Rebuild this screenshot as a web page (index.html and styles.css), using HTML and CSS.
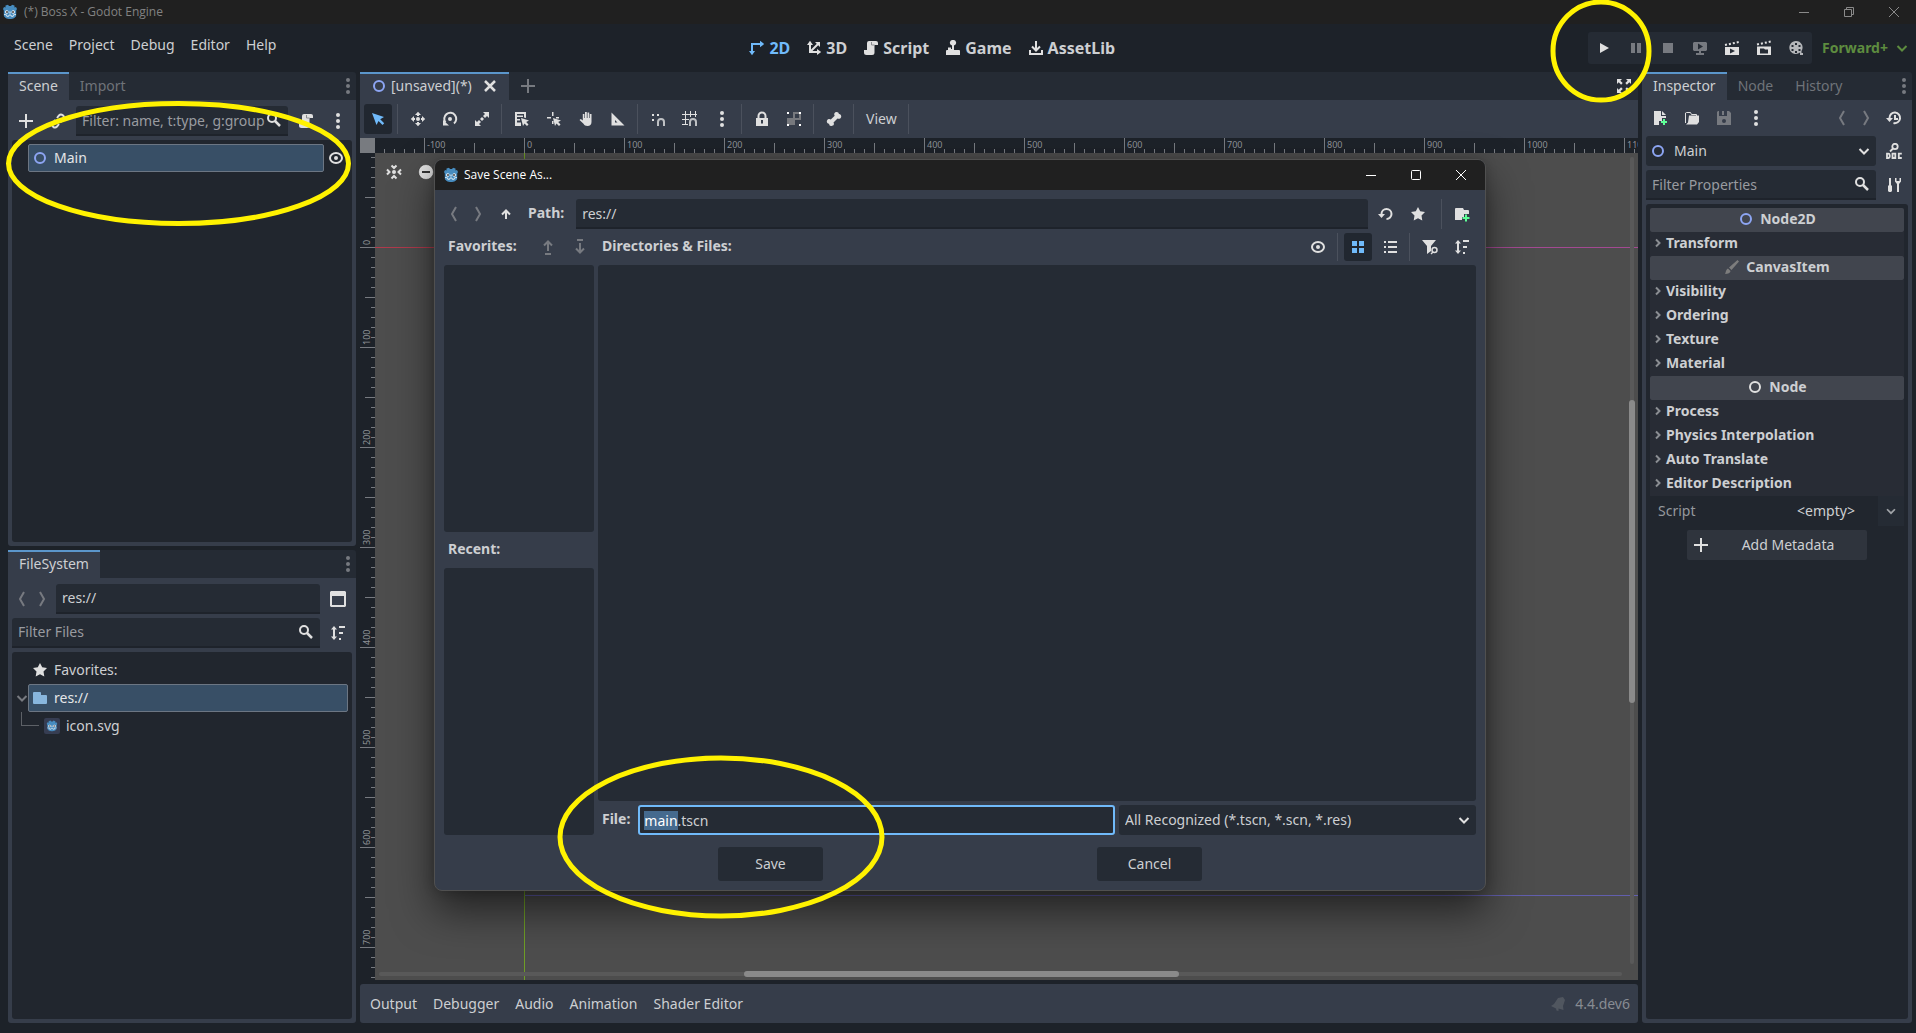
FILE: index.html
```html
<!DOCTYPE html>
<html lang="en">

<head>
    <meta charset="UTF-8">
    <meta name="viewport" content="width=device-width, initial-scale=1.0">
    <title>(*) Boss X - Godot Engine</title>
    <link rel="stylesheet" href="styles.css">
</head>

<body>
    <svg class="sprite" aria-hidden="true">
        <symbol id="godot" viewBox="0 0 16 16">
            <path fill="#478cbf" d="M1 5l1-2 1.500.6V1.500L6 .8 7 2h2l1-1.200 2.500.7v2.100L14 3l1 2-.8 1.500V11c0 2.500-3 4-6.200 4s-6.200-1.500-6.200-4V6.500z" />
            <path fill="none" stroke="#d5e6f2" d="M2 10.500l2.500.3.3 1.500h1.900l.3-1.300h2l.3 1.300h1.900l.3-1.500 2.500-.3" />
            <circle cx="4.800" cy="8" r="1.700" fill="#fff" />
            <circle cx="11.200" cy="8" r="1.700" fill="#fff" />
            <circle cx="5" cy="8" r="1" fill="#414042" />
            <circle cx="11" cy="8" r="1" fill="#414042" />
            <path stroke="#fff" d="M8 7.500v2" />
        </symbol>
        <symbol id="ring" viewBox="0 0 16 16"><circle cx="8" cy="8" r="5" fill="none" stroke="currentColor" stroke-width="2" /></symbol>
        <symbol id="plus" viewBox="0 0 16 16"><path stroke="currentColor" stroke-width="2" d="M8 1v14M1 8h14" /></symbol>
        <symbol id="cross" viewBox="0 0 16 16"><path stroke="currentColor" stroke-width="2.500" d="M3 3l10 10M13 3L3 13" /></symbol>
        <symbol id="link" viewBox="0 0 16 16"><path fill="none" stroke="currentColor" stroke-width="2" d="M7 5l2-2.500a2.600 2.600 0 0 1 4 3.700L10.500 9M9 11l-2 2.500a2.600 2.600 0 0 1-4-3.700L5.500 7M6 10l4-4" /></symbol>
        <symbol id="search" viewBox="0 0 16 16"><circle cx="6" cy="6" r="4" fill="none" stroke="currentColor" stroke-width="2" /><path stroke="currentColor" stroke-width="2.500" d="M9 9l5 5" /></symbol>
        <symbol id="script" viewBox="0 0 16 16"><path fill="currentColor" d="M6 1a2 2 0 0 0-2 2v7H1v2.500A2.500 2.500 0 0 0 3.500 15H9a2.500 2.500 0 0 0 2.500-2.500V5H15V3a2 2 0 0 0-2-2z" /><path fill="none" stroke="#8a8c90" d="M8.500 2v3h3" /></symbol>
        <symbol id="dots" viewBox="0 0 16 16"><g fill="currentColor"><circle cx="8" cy="2" r="2" /><circle cx="8" cy="8" r="2" /><circle cx="8" cy="14" r="2" /></g></symbol>
        <symbol id="eye" viewBox="0 0 16 16"><ellipse cx="8" cy="8" rx="6" ry="5" fill="none" stroke="currentColor" stroke-width="2" /><circle cx="8" cy="8" r="2" fill="currentColor" /></symbol>
        <symbol id="star" viewBox="0 0 16 16"><path fill="currentColor" d="M8 1l2.200 4.300L15 6l-3.500 3.400.8 5.100L8 12.200l-4.300 2.300.8-5.100L1 6l4.800-.7z" /></symbol>
        <symbol id="folder" viewBox="0 0 16 16"><path fill="currentColor" d="M1 3a1 1 0 0 1 1-1h6a1 1 0 0 1 1 1v2h5a1 1 0 0 1 1 1v7a1 1 0 0 1-1 1H2a1 1 0 0 1-1-1z" /></symbol>
        <symbol id="folder-new" viewBox="0 0 16 16"><path fill="currentColor" d="M1 3a1 1 0 0 1 1-1h7l1 2h4a1 1 0 0 1 1 1v3h-5v3H8v3H1z" /><path stroke="#5fff97" stroke-width="2" d="M12 8.500v7M8.500 12h7" /></symbol>
        <symbol id="back" viewBox="0 0 16 16"><path fill="none" stroke="currentColor" stroke-width="2" d="M10 1L6 8l4 7" /></symbol>
        <symbol id="forward" viewBox="0 0 16 16"><path fill="none" stroke="currentColor" stroke-width="2" d="M6 1l4 7-4 7" /></symbol>
        <symbol id="up" viewBox="0 0 16 16"><path fill="none" stroke="currentColor" stroke-width="2" d="M8 13V5M4 8.500l4-4 4 4" /></symbol>
        <symbol id="move-up" viewBox="0 0 16 16"><path fill="none" stroke="currentColor" stroke-width="2" d="M8 12V3M4 6.500l4-4 4 4M5 15h6" /></symbol>
        <symbol id="move-down" viewBox="0 0 16 16"><path fill="none" stroke="currentColor" stroke-width="2" d="M8 4v9M4 9.500l4 4 4-4M5 1h6" /></symbol>
        <symbol id="chevron" viewBox="0 0 16 16"><path fill="none" stroke="currentColor" stroke-width="2" d="M3.500 6L8 10.500 12.500 6" /></symbol>
        <symbol id="caret" viewBox="0 0 16 16"><path fill="none" stroke="currentColor" stroke-width="2" d="M6 4.500L9.500 8 6 11.500" /></symbol>
        <symbol id="panel" viewBox="0 0 16 16"><path fill="currentColor" fill-rule="evenodd" d="M1 0h14l1 1v14l-1 1H1l-1-1V1zM2 5v9h12V5z" /></symbol>
        <symbol id="sort" viewBox="0 0 16 16"><path fill="currentColor" d="M9 1h6v2H9zM9 7h4v2H9zM9 13h2v2H9zM4 1l3 3.500H5v7h2L4 15l-3-3.500h2v-7H1z" /></symbol>
        <symbol id="mode-2d" viewBox="0 0 16 16"><path fill="none" stroke="currentColor" stroke-width="2" d="M3 12V4h8" /><path fill="currentColor" d="M11 .8L15.200 4 11 7.200zM0 11l3 4.200L6 11z" /></symbol>
        <symbol id="mode-3d" viewBox="0 0 16 16"><path fill="none" stroke="currentColor" stroke-width="2" d="M4 4v8h8M4 12l8-8" /><path fill="currentColor" d="M1 5l3-4.200L7 5zM11 9l4.200 3-4.200 3zM9 2h5v5z" /></symbol>
        <symbol id="game" viewBox="0 0 16 16"><path fill="currentColor" d="M8 0a2.800 2.800 0 0 0-1 5.500V9H6V7.500H3V10H1.500L1 11v4h14v-4l-.5-1H9V5.500A2.800 2.800 0 0 0 8 0z" /></symbol>
        <symbol id="assets" viewBox="0 0 16 16"><path fill="none" stroke="currentColor" stroke-width="2" d="M8 1v9M4 6.500l4 4 4-4M2 10v4h12v-4" /></symbol>
        <symbol id="play" viewBox="0 0 16 16"><path fill="currentColor" d="M4 3l9 5-9 5z" /></symbol>
        <symbol id="pause" viewBox="0 0 16 16"><path fill="currentColor" d="M3 3h4v10H3zM9 3h4v10H9z" /></symbol>
        <symbol id="stop" viewBox="0 0 16 16"><path fill="currentColor" d="M3 3h10v10H3z" /></symbol>
        <symbol id="remote" viewBox="0 0 16 16"><path fill="currentColor" fill-rule="evenodd" d="M2 2h12l1 1v7l-1 1H9v2h3v2H4v-2h3v-2H2l-1-1V3zM6 3.500v6l5-3z" /></symbol>
        <symbol id="play-scene" viewBox="0 0 16 16"><path fill="currentColor" fill-rule="evenodd" d="M1 7h14v8H1zM6 8.500v5l5-2.500z" /><path stroke="currentColor" stroke-width="2" stroke-dasharray="2 2" d="M1 5l14-3" /></symbol>
        <symbol id="play-custom" viewBox="0 0 16 16"><path fill="currentColor" fill-rule="evenodd" d="M1 6.500h14V15H1zM4 8.500v5h8V9.500H9l-1-1z" /><path stroke="currentColor" stroke-width="2" stroke-dasharray="2 2" d="M1 4.500l14-3" /></symbol>
        <symbol id="movie" viewBox="0 0 16 16"><path fill="currentColor" fill-rule="evenodd" d="M8 1a6.500 6.500 0 1 0 4 11.500V15h3v-2h-1.500V11A6.500 6.500 0 0 0 8 1zM7 3h2v2H7zM3.500 5h2v2h-2zM10.500 5h2v2h-2zM3.500 9h2v2h-2zM10.500 9h2v2h-2zM7 11h2v2H7z" /></symbol>
        <symbol id="expand" viewBox="0 0 16 16"><path fill="currentColor" d="M1 1h5L4.300 2.700l2.400 2.400-1.600 1.600-2.400-2.400L1 6zM15 1v5l-1.700-1.700-2.400 2.400-1.600-1.600 2.400-2.400L10 1zM1 15v-5l1.700 1.700 2.400-2.400 1.600 1.600-2.400 2.400L6 15zM15 15h-5l1.700-1.700-2.400-2.400 1.600-1.600 2.400 2.400L15 10z" /></symbol>
        <symbol id="select" viewBox="0 0 16 16"><path fill="currentColor" d="M2 2l4.500 12 2-4 4 4 1.700-1.700-4-4L14 6z" /></symbol>
        <symbol id="move" viewBox="0 0 16 16"><circle cx="8" cy="8" r="2" fill="currentColor" /><path fill="currentColor" d="M8 .8L5 4h2v1h2V4h2zM8 15.200l3-3.200H9v-1H7v1H5zM.8 8L4 11V9h1V7H4V5zM15.200 8L12 5v2h-1v2h1v2z" /></symbol>
        <symbol id="rotate" viewBox="0 0 16 16"><path fill="none" stroke="currentColor" stroke-width="2" d="M3.500 11.500A6 6 0 1 1 12 12.500" /><path fill="currentColor" d="M1 9v5.500h6z" /><circle cx="8" cy="8" r="2" fill="currentColor" /></symbol>
        <symbol id="scale" viewBox="0 0 16 16"><path fill="currentColor" d="M9 1h6v6l-2-2-2 2-2-2 2-2zM1 9l2 2 2-2 2 2-2 2 2 2H1zM6 8l2-2 2 2-2 2z" /></symbol>
        <symbol id="list-select" viewBox="0 0 16 16"><path fill="currentColor" fill-rule="evenodd" d="M1 1h11v6l-2-.5V3H3v1.500h6V6H3v2h3v1.500H3v2h4V15H1z" /><path fill="currentColor" d="M7 7l2 8 1.500-2.500L13 15l1.500-1.500L12.200 11 15 9.500z" /></symbol>
        <symbol id="pivot" viewBox="0 0 16 16"><path fill="currentColor" d="M6 1h1.500v4H6zM1 6h4v1.500H1zM10 6h3v1.500h-3zM6 10h1.500v3H6zM7 7l2 8 1.500-2.500L13 15l1.500-1.500L12.200 11 15 9.500z" /></symbol>
        <symbol id="hand" viewBox="0 0 16 16"><path fill="currentColor" d="M7 1h1.800v6h.7V1.500h1.700V7h.6V3h1.700v8c0 2.500-1.500 4-4 4-2 0-3.200-.8-4-2.200L1.500 9l1.300-1 2 1.500V3h1.600v4H7z" /></symbol>
        <symbol id="measure" viewBox="0 0 16 16"><path fill="currentColor" fill-rule="evenodd" d="M1.500 1.500v13h13zM5 9l2.500 2.500H5z" /></symbol>
        <symbol id="snap" viewBox="0 0 16 16"><path fill="currentColor" d="M2 3h2v2H2zM7 3h2v2H7zM2 8h2v2H2z" /><path fill="none" stroke="#bfc1c4" stroke-width="2" d="M8 15v-4a3 3 0 0 1 6 0v4" /></symbol>
        <symbol id="grid-snap" viewBox="0 0 16 16"><path stroke="currentColor" d="M3.500 0v13M8.500 0v6M13.500 0v6M0 3.500h15M0 8.500h7M0 13.500h6" /><path fill="none" stroke="#bfc1c4" stroke-width="2" d="M8 15v-4a3 3 0 0 1 6 0v4" /></symbol>
        <symbol id="lock" viewBox="0 0 16 16"><path fill="none" stroke="currentColor" stroke-width="2" d="M4.500 8V5a3.500 3.500 0 0 1 7 0v3" /><path fill="currentColor" fill-rule="evenodd" d="M2 7h12v8H2zM7 9v3.500h2V9z" /></symbol>
        <symbol id="group" viewBox="0 0 16 16"><path fill="#77797e" fill-rule="evenodd" d="M7 1h8v8h-6v5H1V7h6zM9 3v4h4V3z" /><path fill="#fff" d="M1 1h2v2H1zM13 1h2v2h-2zM1 13h2v2H1zM13 13h2v2h-2z" /></symbol>
        <symbol id="bone" viewBox="0 0 16 16"><path fill="currentColor" d="M10.500 1a2.300 2.300 0 0 0-1.800 3.700L4.800 8.600A2.400 2.400 0 1 0 3 12.800a2.400 2.400 0 1 0 4.500-1.400l4-4A2.400 2.400 0 1 0 13 3a2.400 2.400 0 0 0-2.500-2z" /></symbol>
        <symbol id="center" viewBox="0 0 16 16"><circle cx="8" cy="8" r="2" fill="currentColor" /><path fill="none" stroke="currentColor" stroke-width="2" d="M5.500 1.500L8 4l2.500-2.500M5.500 14.500L8 12l2.500 2.500M1 5.500L3.500 8 1 10.500M15 5.500L12.500 8l2.500 2.500" /></symbol>
        <symbol id="zoom-less" viewBox="0 0 16 16"><circle cx="8" cy="8" r="7.500" fill="#e0e0e0" stroke="#222" stroke-width=".5" /><path stroke="#333" stroke-width="2" d="M4 8h8" /></symbol>
        <symbol id="file-new" viewBox="0 0 16 16"><path fill="currentColor" d="M2 1h7v5h5v2h-4v3H7v4H2zM10 1l4 4h-4z" /><path stroke="#5fff97" stroke-width="2" d="M12 9v6M9 12h6" /></symbol>
        <symbol id="load" viewBox="0 0 16 16"><path fill="none" stroke="currentColor" d="M1.500 13V3l1-.5h4l1 2h5v2" /><path fill="currentColor" d="M5 5.500h10v6.500l-2 2.500H2l2-2z" /></symbol>
        <symbol id="save" viewBox="0 0 16 16"><path fill="currentColor" fill-rule="evenodd" d="M1 2l1-1h1v5h8V1h2l2 2v12H1zM8 9a2 2 0 1 0 0 4 2 2 0 0 0 0-4z" /><path fill="currentColor" d="M6 1h2v4H6z" /></symbol>
        <symbol id="history" viewBox="0 0 16 16"><path fill="none" stroke="currentColor" stroke-width="2" d="M3.500 9V8a5.300 5.300 0 1 1 4 5M9 5v4h3" /><path fill="currentColor" d="M0 8h7l-3.500 4z" /></symbol>
        <symbol id="doc" viewBox="0 0 16 16"><circle cx="9" cy="3.500" r="2.700" fill="none" stroke="currentColor" stroke-width="1.800" /><path fill="none" stroke="currentColor" stroke-width="1.800" d="M7 5.500L4 8.500M1 10.700v4.300h1.200a1.500 1.500 0 0 0 1.500-1.500v-1.300a1.500 1.500 0 0 0-1.500-1.500zM6.500 10.700h2.800v4.300H6.500zM15.800 10.700h-3v4.300h3" /></symbol>
        <symbol id="tools" viewBox="0 0 16 16"><path fill="currentColor" d="M3 1h2v7l1 1v5l-1 1H3l-1-1V9l1-1zM9 1v3.500L11 7v8h2V7l2-2.500V1h-1.500v3h-3V1z" /></symbol>
        <symbol id="brush" viewBox="0 0 16 16"><path fill="currentColor" d="M13.500 1L15 2.500 7.500 11 5 8.500zM4 9.500L6.500 12c0 2-2.500 3-5.500 3 1-1 .5-4.500 3-5.500z" /></symbol>
        <symbol id="refresh" viewBox="0 0 16 16"><path fill="none" stroke="currentColor" stroke-width="2" d="M3.500 9V8a5 5 0 1 1 5 5" /><path fill="currentColor" d="M0 8h7l-3.500 4z" /></symbol>
        <symbol id="thumbs" viewBox="0 0 16 16"><path fill="currentColor" d="M2 2h5v5H2zM9 2h5v5H9zM2 9h5v5H2zM9 9h5v5H9z" /></symbol>
        <symbol id="list" viewBox="0 0 16 16"><path fill="currentColor" d="M2 2h2v2H2zM6 2h9v2H6zM2 7h2v2H2zM6 7h9v2H6zM2 12h2v2H2zM6 12h9v2H6z" /></symbol>
        <symbol id="filter" viewBox="0 0 16 16"><path fill="currentColor" d="M0 1h14l-5 6v5l-4 3V7z" /><circle cx="12.500" cy="11" r="2.500" fill="#363d4a" stroke="currentColor" stroke-width="1.500" /><path stroke="currentColor" stroke-width="1.500" d="M11 13l-2 2" /></symbol>
        <symbol id="bell" viewBox="0 0 16 16"><path fill="currentColor" d="M8 2l5-1 2 3-2 6 .5 4-5-1.500V15l-2-.5-.5-2L1 10l3-2z" /></symbol>
        <symbol id="win-min" viewBox="0 0 16 16"><path stroke="currentColor" d="M3 8.500h10" /></symbol>
        <symbol id="win-max" viewBox="0 0 16 16"><rect x="3.500" y="3.500" width="9" height="9" rx="1" fill="none" stroke="currentColor" /></symbol>
        <symbol id="win-restore" viewBox="0 0 16 16"><path fill="none" stroke="currentColor" d="M3.500 5.500h7v7h-7zM5.500 5V3.500h7v7H11" /></symbol>
        <symbol id="win-close" viewBox="0 0 16 16"><path stroke="currentColor" d="M3 3l10 10M13 3L3 13" /></symbol>
    </svg>

    <header class="titlebar">
        <svg class="icon"><use href="#godot" /></svg>
        <span class="titlebar-text">(*) Boss X - Godot Engine</span>
        <button class="win-btn" aria-label="Minimize"><svg class="icon"><use href="#win-min" /></svg></button>
        <button class="win-btn" aria-label="Restore"><svg class="icon"><use href="#win-restore" /></svg></button>
        <button class="win-btn" aria-label="Close"><svg class="icon"><use href="#win-close" /></svg></button>
    </header>

    <div class="menubar">
        <nav class="text-menu">
            <button>Scene</button>
            <button>Project</button>
            <button>Debug</button>
            <button>Editor</button>
            <button>Help</button>
        </nav>
        <div class="modes">
            <button class="active"><svg class="icon"><use href="#mode-2d" /></svg>2D</button>
            <button><svg class="icon"><use href="#mode-3d" /></svg>3D</button>
            <button><svg class="icon"><use href="#script" /></svg>Script</button>
            <button><svg class="icon"><use href="#game" /></svg>Game</button>
            <button><svg class="icon"><use href="#assets" /></svg>AssetLib</button>
        </div>
        <div class="run">
            <div class="run-bar">
                <button class="tool" aria-label="Run Project"><svg class="icon"><use href="#play" /></svg></button>
                <button class="tool dim" aria-label="Pause"><svg class="icon"><use href="#pause" /></svg></button>
                <button class="tool dim" aria-label="Stop"><svg class="icon"><use href="#stop" /></svg></button>
                <button class="tool dim" aria-label="Remote Debug"><svg class="icon"><use href="#remote" /></svg></button>
                <button class="tool" aria-label="Run Current Scene"><svg class="icon"><use href="#play-scene" /></svg></button>
                <button class="tool" aria-label="Run Specific Scene"><svg class="icon"><use href="#play-custom" /></svg></button>
                <button class="tool soft" aria-label="Movie Maker"><svg class="icon"><use href="#movie" /></svg></button>
            </div>
            <button class="renderer">Forward+<svg class="icon"><use href="#chevron" /></svg></button>
        </div>
    </div>

    <div class="workspace">
        <div class="side">
            <section class="dock">
                <div class="tabs">
                    <button class="tab active">Scene</button>
                    <button class="tab">Import</button>
                    <button class="tab-menu" aria-label="Dock options"><svg class="icon"><use href="#dots" /></svg></button>
                </div>
                <div class="dock-body">
                    <div class="row">
                        <button class="tool" aria-label="Add Node"><svg class="icon"><use href="#plus" /></svg></button>
                        <button class="tool" aria-label="Instantiate Scene"><svg class="icon"><use href="#link" /></svg></button>
                        <div class="field">
                            <input type="text" aria-label="Filter nodes" placeholder="Filter: name, t:type, g:group">
                            <svg class="icon"><use href="#search" /></svg>
                        </div>
                        <button class="tool" aria-label="Attach Script"><svg class="icon"><use href="#script" /></svg></button>
                        <button class="tool" aria-label="More"><svg class="icon"><use href="#dots" /></svg></button>
                    </div>
                    <div class="tree">
                        <div class="tree-row">
                            <span class="fold"></span>
                            <button class="item selected"><svg class="icon blue"><use href="#ring" /></svg>Main</button>
                            <button class="visible" aria-label="Toggle visibility"><svg class="icon"><use href="#eye" /></svg></button>
                        </div>
                    </div>
                </div>
            </section>

            <section class="dock">
                <div class="tabs">
                    <button class="tab active">FileSystem</button>
                    <button class="tab-menu" aria-label="Dock options"><svg class="icon"><use href="#dots" /></svg></button>
                </div>
                <div class="dock-body">
                    <div class="row">
                        <div class="arrows">
                            <button class="dim" aria-label="Back"><svg class="icon"><use href="#back" /></svg></button>
                            <button class="dim" aria-label="Forward"><svg class="icon"><use href="#forward" /></svg></button>
                        </div>
                        <div class="field"><input type="text" aria-label="Current path" value="res://"></div>
                        <button class="tool" aria-label="Change split mode"><svg class="icon"><use href="#panel" /></svg></button>
                    </div>
                    <div class="row">
                        <div class="field">
                            <input type="text" aria-label="Filter files" placeholder="Filter Files">
                            <svg class="icon"><use href="#search" /></svg>
                        </div>
                        <button class="tool" aria-label="Sort files"><svg class="icon"><use href="#sort" /></svg></button>
                    </div>
                    <div class="tree">
                        <div class="tree-row">
                            <span class="fold"></span>
                            <button class="item"><svg class="icon"><use href="#star" /></svg>Favorites:</button>
                        </div>
                        <div class="tree-row">
                            <span class="fold dim"><svg class="icon"><use href="#chevron" /></svg></span>
                            <button class="item selected"><svg class="icon folder"><use href="#folder" /></svg>res://</button>
                        </div>
                        <div class="tree-row child">
                            <span class="branch"></span>
                            <button class="item"><svg class="icon thumb"><use href="#godot" /></svg>icon.svg</button>
                        </div>
                    </div>
                </div>
            </section>
        </div>

        <main class="center">
            <section class="editor">
                <div class="tabs">
                    <button class="tab active scene-tab"><svg class="icon blue"><use href="#ring" /></svg>[unsaved](*)<svg class="icon close"><use href="#cross" /></svg></button>
                    <button class="tab add-tab" aria-label="Add a new scene"><svg class="icon"><use href="#plus" /></svg></button>
                    <button class="tab-menu bright" aria-label="Distraction free mode"><svg class="icon"><use href="#expand" /></svg></button>
                </div>
                <div class="toolbar">
                    <button class="tool on" aria-label="Select Mode"><svg class="icon"><use href="#select" /></svg></button>
                    <span class="sep"></span>
                    <button class="tool" aria-label="Move Mode"><svg class="icon"><use href="#move" /></svg></button>
                    <button class="tool" aria-label="Rotate Mode"><svg class="icon"><use href="#rotate" /></svg></button>
                    <button class="tool" aria-label="Scale Mode"><svg class="icon"><use href="#scale" /></svg></button>
                    <span class="sep"></span>
                    <button class="tool" aria-label="List Select"><svg class="icon"><use href="#list-select" /></svg></button>
                    <button class="tool" aria-label="Change Pivot"><svg class="icon"><use href="#pivot" /></svg></button>
                    <button class="tool" aria-label="Pan Mode"><svg class="icon"><use href="#hand" /></svg></button>
                    <button class="tool" aria-label="Ruler Mode"><svg class="icon"><use href="#measure" /></svg></button>
                    <span class="sep"></span>
                    <button class="tool" aria-label="Smart Snap"><svg class="icon"><use href="#snap" /></svg></button>
                    <button class="tool" aria-label="Grid Snap"><svg class="icon"><use href="#grid-snap" /></svg></button>
                    <button class="tool" aria-label="Snapping Options"><svg class="icon"><use href="#dots" /></svg></button>
                    <span class="sep"></span>
                    <button class="tool" aria-label="Lock"><svg class="icon"><use href="#lock" /></svg></button>
                    <button class="tool" aria-label="Group"><svg class="icon"><use href="#group" /></svg></button>
                    <span class="sep"></span>
                    <button class="tool" aria-label="Skeleton Options"><svg class="icon"><use href="#bone" /></svg></button>
                    <span class="sep"></span>
                    <button class="view-btn">View</button>
                    <span class="sep"></span>
                </div>
                <div class="canvas-grid">
                    <div class="corner"></div>
                    <div class="ruler ruler-x">
                        <span>-100</span><span>0</span><span>100</span><span>200</span><span>300</span><span>400</span><span>500</span><span>600</span><span>700</span><span>800</span><span>900</span><span>1000</span><span>1100</span>
                    </div>
                    <div class="ruler ruler-y">
                        <span>0</span><span>100</span><span>200</span><span>300</span><span>400</span><span>500</span><span>600</span><span>700</span>
                    </div>
                    <div class="canvas">
                        <div class="axis axis-x"></div>
                        <div class="axis axis-y"></div>
                        <div class="frame-top"></div>
                        <div class="frame-bottom"></div>
                        <div class="zoom-tools">
                            <button aria-label="Center View"><svg class="icon"><use href="#center" /></svg></button>
                            <button aria-label="Zoom Out"><svg class="icon"><use href="#zoom-less" /></svg></button>
                        </div>
                        <div class="scroll scroll-x"><div class="thumb-x"></div></div>
                        <div class="scroll scroll-y"><div class="thumb-y"></div></div>
                    </div>
                </div>
            </section>
            <footer class="bottom-panel">
                <nav class="text-menu">
                    <button>Output</button>
                    <button>Debugger</button>
                    <button>Audio</button>
                    <button>Animation</button>
                    <button>Shader Editor</button>
                </nav>
                <div class="version"><svg class="icon"><use href="#bell" /></svg><span>4.4.dev6</span></div>
            </footer>
        </main>

        <section class="dock inspector">
            <div class="tabs">
                <button class="tab active">Inspector</button>
                <button class="tab">Node</button>
                <button class="tab">History</button>
                <button class="tab-menu" aria-label="Dock options"><svg class="icon"><use href="#dots" /></svg></button>
            </div>
            <div class="dock-body">
                <div class="row tools-row">
                    <button class="tool" aria-label="New Resource"><svg class="icon"><use href="#file-new" /></svg></button>
                    <button class="tool" aria-label="Load Resource"><svg class="icon"><use href="#load" /></svg></button>
                    <button class="tool dim" aria-label="Save Resource"><svg class="icon"><use href="#save" /></svg></button>
                    <button class="tool" aria-label="Extra options"><svg class="icon"><use href="#dots" /></svg></button>
                    <div class="arrows push">
                        <button class="dim" aria-label="Previous object"><svg class="icon"><use href="#back" /></svg></button>
                        <button class="dim" aria-label="Next object"><svg class="icon"><use href="#forward" /></svg></button>
                    </div>
                    <button class="tool" aria-label="History"><svg class="icon"><use href="#history" /></svg></button>
                </div>
                <div class="row">
                    <div class="drop">
                        <svg class="icon blue lead"><use href="#ring" /></svg>
                        <select class="with-lead" aria-label="Edited object"><option>Main</option></select>
                        <svg class="icon arrow"><use href="#chevron" /></svg>
                    </div>
                    <button class="tool" aria-label="Open documentation"><svg class="icon"><use href="#doc" /></svg></button>
                </div>
                <div class="row">
                    <div class="field">
                        <input type="text" aria-label="Filter properties" placeholder="Filter Properties">
                        <svg class="icon"><use href="#search" /></svg>
                    </div>
                    <button class="tool" aria-label="Manage properties"><svg class="icon"><use href="#tools" /></svg></button>
                </div>
                <div class="props">
                    <h3><svg class="icon blue"><use href="#ring" /></svg>Node2D</h3>
                    <button class="group"><svg class="icon"><use href="#caret" /></svg>Transform</button>
                    <h3><svg class="icon grey"><use href="#brush" /></svg>CanvasItem</h3>
                    <button class="group"><svg class="icon"><use href="#caret" /></svg>Visibility</button>
                    <button class="group"><svg class="icon"><use href="#caret" /></svg>Ordering</button>
                    <button class="group"><svg class="icon"><use href="#caret" /></svg>Texture</button>
                    <button class="group"><svg class="icon"><use href="#caret" /></svg>Material</button>
                    <h3><svg class="icon"><use href="#ring" /></svg>Node</h3>
                    <button class="group"><svg class="icon"><use href="#caret" /></svg>Process</button>
                    <button class="group"><svg class="icon"><use href="#caret" /></svg>Physics Interpolation</button>
                    <button class="group"><svg class="icon"><use href="#caret" /></svg>Auto Translate</button>
                    <button class="group"><svg class="icon"><use href="#caret" /></svg>Editor Description</button>
                    <div class="prop">
                        <span class="prop-name">Script</span>
                        <button class="prop-value">&lt;empty&gt;</button>
                        <button class="prop-more" aria-label="Script options"><svg class="icon"><use href="#chevron" /></svg></button>
                    </div>
                    <button class="add-meta"><svg class="icon"><use href="#plus" /></svg><span>Add Metadata</span></button>
                </div>
            </div>
        </section>
    </div>

    <div class="dialog" role="dialog" aria-label="Save Scene As...">
        <div class="dialog-title">
            <svg class="icon"><use href="#godot" /></svg>
            <span class="titlebar-text">Save Scene As...</span>
            <button class="win-btn" aria-label="Minimize"><svg class="icon"><use href="#win-min" /></svg></button>
            <button class="win-btn" aria-label="Maximize"><svg class="icon"><use href="#win-max" /></svg></button>
            <button class="win-btn" aria-label="Close"><svg class="icon"><use href="#win-close" /></svg></button>
        </div>
        <div class="dialog-body">
            <div class="row">
                <div class="arrows spaced">
                    <button class="dim" aria-label="Back"><svg class="icon"><use href="#back" /></svg></button>
                    <button class="dim" aria-label="Forward"><svg class="icon"><use href="#forward" /></svg></button>
                </div>
                <button class="tool" aria-label="Parent folder"><svg class="icon"><use href="#up" /></svg></button>
                <label class="caption path-label" for="path">Path:</label>
                <div class="field"><input type="text" id="path" value="res://"></div>
                <button class="tool" aria-label="Refresh"><svg class="icon"><use href="#refresh" /></svg></button>
                <button class="tool" aria-label="Favorite"><svg class="icon"><use href="#star" /></svg></button>
                <span class="sep wide"></span>
                <button class="tool" aria-label="Create folder"><svg class="icon"><use href="#folder-new" /></svg></button>
            </div>
            <div class="browser">
                <div class="places">
                    <div class="row head">
                        <span class="caption grow">Favorites:</span>
                        <button class="tool dim" aria-label="Move up"><svg class="icon"><use href="#move-up" /></svg></button>
                        <button class="tool dim" aria-label="Move down"><svg class="icon"><use href="#move-down" /></svg></button>
                    </div>
                    <div class="list"></div>
                    <div class="row head"><span class="caption">Recent:</span></div>
                    <div class="list"></div>
                </div>
                <div class="files">
                    <div class="row head">
                        <span class="caption grow">Directories &amp; Files:</span>
                        <button class="tool" aria-label="Toggle hidden files"><svg class="icon"><use href="#eye" /></svg></button>
                        <span class="sep"></span>
                        <button class="tool on" aria-label="Grid view"><svg class="icon"><use href="#thumbs" /></svg></button>
                        <button class="tool" aria-label="List view"><svg class="icon"><use href="#list" /></svg></button>
                        <span class="sep"></span>
                        <button class="tool" aria-label="Toggle filter"><svg class="icon"><use href="#filter" /></svg></button>
                        <button class="tool" aria-label="Sort"><svg class="icon"><use href="#sort" /></svg></button>
                    </div>
                    <div class="list"></div>
                    <div class="row">
                        <label class="caption" for="file">File:</label>
                        <div class="field file-field"><input type="text" id="file" value="main.tscn"></div>
                        <div class="drop type-drop">
                            <select aria-label="File type"><option>All Recognized (*.tscn, *.scn, *.res)</option></select>
                            <svg class="icon arrow"><use href="#chevron" /></svg>
                        </div>
                    </div>
                </div>
            </div>
            <div class="actions">
                <button>Save</button>
                <button>Cancel</button>
            </div>
        </div>
    </div>

    <svg class="marks" aria-hidden="true">
        <ellipse cx="178.500" cy="163.500" rx="170" ry="60" />
        <ellipse cx="1601" cy="51" rx="48" ry="49" />
        <ellipse cx="721" cy="837" rx="161" ry="79" />
    </svg>

    <script>
        // Preselect the name without its extension
        const fileInput = document.getElementById("file");
        fileInput.focus();
        fileInput.setSelectionRange(0, fileInput.value.lastIndexOf("."));
    </script>
</body>

</html>
```
FILE: styles.css
```css
* {
    box-sizing: border-box;
}

body {
    display: flex;
    flex-direction: column;
    height: 100vh;
    margin: 0;
    overflow: hidden;
    background-color: #1d2229;
    color: #cdcfd2;
    font-family: "Noto Sans", "Open Sans", sans-serif;
    font-size: 14px;
    line-height: 20px;
}

button,
input,
select {
    margin: 0;
    padding: 0;
    border: none;
    background: none;
    color: inherit;
    font: inherit;
}

.sprite {
    display: none;
}

.icon {
    display: block;
    flex: none;
    width: 16px;
    height: 16px;
    color: #e0e0e0;
}

.icon.blue {
    color: #8da5f3;
}

.icon.grey {
    color: #7d7d7d;
}

.icon.folder {
    color: #88b6dd;
}

.dim .icon {
    color: #777a80;
}

.soft .icon {
    color: #b4b6b9;
}

/* Window title */

.titlebar {
    display: flex;
    align-items: center;
    height: 24px;
    padding-left: 2px;
    background-color: #202020;
    color: #828282;
}

.titlebar-text {
    flex: 1;
    margin-left: 6px;
    font-family: "Open Sans", "Noto Sans", sans-serif;
    font-size: 12px;
    line-height: 16px;
}

.win-btn {
    display: flex;
    align-items: center;
    justify-content: center;
    width: 45px;
    height: 22px;
}

.titlebar .win-btn .icon {
    color: #8a8a8a;
}

.dialog-title .win-btn .icon {
    color: #fff;
}

/* Menu bar */

.menubar {
    display: flex;
    align-items: center;
    justify-content: space-between;
    height: 48px;
    padding: 0 6px 0 14px;
}

.text-menu {
    display: flex;
    gap: 16px;
}

.menubar .text-menu {
    padding-bottom: 6px;
}

.modes {
    display: flex;
    gap: 16px;
    font-size: 16px;
    font-weight: 700;
}

.modes button {
    display: flex;
    align-items: center;
    gap: 4px;
}

.modes .active,
.modes .active .icon {
    color: #70bafa;
}

.run {
    display: flex;
    align-items: center;
    gap: 10px;
}

.run-bar {
    display: flex;
    gap: 4px;
    padding: 1px 2px;
    border-radius: 3px;
    background-color: #252b34;
}

.renderer {
    display: flex;
    align-items: center;
    gap: 6px;
    color: #5d8c3f;
    font-weight: 700;
}

.renderer .icon {
    color: #5d8c3f;
}

/* Docks */

.workspace {
    display: grid;
    flex: 1;
    grid-template-columns: 348px 1fr 270px;
    gap: 4px;
    min-height: 0;
    padding: 0 4px 10px 8px;
}

.side,
.center,
.editor,
.dock {
    display: flex;
    flex-direction: column;
    min-width: 0;
    min-height: 0;
}

.side,
.center {
    gap: 4px;
}

.dock,
.editor {
    flex: 1;
}

.tabs {
    display: flex;
    height: 28px;
    border-radius: 3px 3px 0 0;
    background-color: #252b34;
}

.tab {
    display: flex;
    align-items: center;
    padding: 0 11px 2px;
    border-top: 2px solid transparent;
    color: #6f7379;
}

.tab.active {
    border-top-color: #5b96cb;
    background-color: #363d4a;
    color: #cdcfd2;
}

.scene-tab {
    gap: 4px;
}

.scene-tab .close {
    margin-left: 6px;
}

.add-tab .icon {
    color: #777a80;
}

.tab-menu {
    margin-left: auto;
    padding: 0 0 0 8px;
}

.tab-menu .icon {
    color: #777a80;
}

.tab-menu.bright {
    padding-right: 6px;
}

.tab-menu.bright .icon {
    color: #e0e0e0;
}

.dock-body {
    display: flex;
    flex: 1;
    flex-direction: column;
    gap: 4px;
    padding: 6px 4px 4px;
    border-radius: 0 0 3px 3px;
    background-color: #363d4a;
}

.inspector .dock-body {
    padding-top: 4px;
}

.row {
    display: flex;
    align-items: center;
    gap: 4px;
}

.tool {
    display: flex;
    flex: none;
    align-items: center;
    justify-content: center;
    width: 28px;
    height: 30px;
    border-radius: 3px;
}

.tools-row .tool,
.head .tool {
    height: 28px;
}

.tool.on {
    background-color: #212730;
}

.tool.on .icon {
    color: #70bafa;
}

.arrows {
    display: flex;
}

.arrows button {
    display: flex;
    justify-content: center;
    width: 20px;
}

.arrows.spaced {
    gap: 4px;
}

.arrows.push {
    gap: 4px;
    margin-left: auto;
}

.field {
    display: flex;
    flex: 1;
    align-items: center;
    min-width: 0;
    height: 30px;
    padding: 0 6px;
    border-bottom: 2px solid #1e232b;
    border-radius: 3px 3px 0 0;
    background-color: #252b34;
}

.field input {
    flex: 1;
    min-width: 0;
    height: 24px;
    outline: none;
}

.field input::placeholder {
    color: #999ba0;
    opacity: 1;
}

.tree {
    flex: 1;
    padding: 4px;
    border-radius: 3px;
    background-color: #21262e;
}

.tree-row {
    display: flex;
    align-items: center;
}

.fold {
    display: flex;
    justify-content: center;
    width: 12px;
}

.item {
    display: flex;
    flex: 1;
    align-items: center;
    gap: 6px;
    height: 28px;
    padding: 0 3px;
    border: 1px solid transparent;
    border-radius: 2px;
    text-align: left;
}

.item.selected {
    border-color: #6c7683;
    background-color: #384f66;
    color: #e4e6e8;
}

.visible {
    display: flex;
    justify-content: center;
    width: 24px;
}

.branch {
    width: 18px;
    height: 14px;
    margin: 0 1px 14px 5px;
    border-bottom: 1px solid #5d6167;
    border-left: 1px solid #5d6167;
}

.thumb {
    padding: 2px;
    border-radius: 2px;
    background-color: #363d52;
}

/* Viewport */

.toolbar {
    display: flex;
    align-items: center;
    gap: 4px;
    height: 38px;
    padding: 0 4px;
    background-color: #363d4a;
}

.sep {
    width: 4px;
    height: 30px;
    background: linear-gradient(#4b515d, #4b515d) 1px 0 / 1px 100% no-repeat;
}

.sep.wide {
    width: 8px;
    background-position: 5px 0;
}

.view-btn {
    padding: 0 6px;
}

.canvas-grid {
    display: grid;
    flex: 1;
    grid-template-rows: 15px 1fr;
    grid-template-columns: 15px 1fr;
    min-height: 0;
}

.corner {
    background-color: #787b80;
}

.ruler {
    display: flex;
    min-width: 0;
    min-height: 0;
    overflow: hidden;
    color: #8e9196;
    font-size: 9px;
    line-height: 14px;
}

.ruler span {
    flex: none;
}

/* Ticks: every 100, every 50, every 10 */
.ruler-x {
    padding-left: 52px;
    background:
        repeating-linear-gradient(to right, #777a80 0 1px, transparent 1px 100px) 49px 0 / 100px 15px repeat-x,
        repeating-linear-gradient(to right, #777a80 0 1px, transparent 1px 50px) 49px 5px / 50px 10px repeat-x,
        repeating-linear-gradient(to right, #777a80 0 1px, transparent 1px 10px) 49px 11px / 10px 4px repeat-x;
}

.ruler-x span {
    width: 100px;
}

.ruler-y {
    flex-direction: column;
    background:
        repeating-linear-gradient(to bottom, #777a80 0 1px, transparent 1px 100px) 0 94px / 15px 100px repeat-y,
        repeating-linear-gradient(to bottom, #777a80 0 1px, transparent 1px 50px) 5px 44px / 10px 50px repeat-y,
        repeating-linear-gradient(to bottom, #777a80 0 1px, transparent 1px 10px) 11px 4px / 4px 10px repeat-y;
}

.ruler-y span {
    height: 100px;
    padding-top: 8px;
    writing-mode: vertical-rl;
    transform: rotate(180deg);
}

.canvas {
    position: relative;
    overflow: hidden;
    background-color: #4d4d4d;
}

/* Items placed on the 2D plane */
.axis,
.frame-top,
.frame-bottom,
.zoom-tools,
.scroll {
    position: absolute;
}

.axis-x {
    top: 94px;
    right: 0;
    left: 0;
    height: 1px;
    background-color: #b03a4c;
}

.axis-y {
    top: 0;
    bottom: 0;
    left: 149px;
    width: 1px;
    background-color: #6f9e26;
}

.frame-top,
.frame-bottom {
    right: 0;
    left: 150px;
    height: 1px;
}

.frame-top {
    top: 94px;
    background-color: #a34a92;
}

.frame-bottom {
    top: 742px;
    background-color: #625fae;
}

.zoom-tools {
    top: 11px;
    left: 11px;
    display: flex;
    gap: 16px;
}

.scroll {
    border-radius: 3px;
    background-color: #595959;
}

.scroll-x {
    right: 16px;
    bottom: 4px;
    left: 4px;
    height: 4px;
}

.scroll-y {
    top: 4px;
    right: 4px;
    bottom: 16px;
    width: 4px;
}

.thumb-x,
.thumb-y {
    border-radius: 3px;
    background-color: #8a8a8a;
}

.thumb-x {
    width: 35%;
    height: 6px;
    margin: -1px auto 0 365px;
}

.thumb-y {
    width: 6px;
    height: 303px;
    margin: 243px 0 0 -1px;
}

.bottom-panel {
    display: flex;
    align-items: center;
    justify-content: space-between;
    height: 39px;
    padding: 0 8px 0 10px;
    border-radius: 3px;
    background-color: #363d4a;
}

.version {
    display: flex;
    align-items: center;
    gap: 9px;
    color: #888c93;
}

.version .icon {
    color: #50565f;
}

/* Inspector */

.drop {
    position: relative;
    flex: 1;
    min-width: 0;
}

.drop select {
    display: block;
    width: 100%;
    height: 30px;
    padding: 0 28px 0 6px;
    border-radius: 3px;
    background-color: #252b34;
    appearance: none;
}

.drop .with-lead {
    padding-left: 28px;
}

.drop .icon {
    position: absolute;
    top: 7px;
    pointer-events: none;
}

.drop .lead {
    left: 4px;
}

.drop .arrow {
    right: 4px;
}

.props {
    display: flex;
    flex: 1;
    flex-direction: column;
    padding: 4px;
    border-radius: 3px;
    background-color: #21262e;
}

.props h3 {
    display: flex;
    align-items: center;
    justify-content: center;
    gap: 6px;
    height: 24px;
    margin: 0;
    padding-bottom: 2px;
    border-radius: 2px;
    background-color: #41454e;
    font-size: 14px;
    font-weight: 700;
}

.group {
    display: flex;
    align-items: center;
    height: 24px;
    padding-bottom: 2px;
    background-color: #282c35;
    font-weight: 700;
}

.group .icon {
    color: #8b8e93;
}

.prop {
    display: flex;
    align-items: center;
    height: 30px;
    padding-left: 8px;
}

.prop-name {
    flex: 1;
    color: #95989d;
}

.prop-value {
    flex: 1;
    padding-left: 12px;
}

.prop-more {
    display: flex;
    align-items: center;
    justify-content: center;
    width: 26px;
    height: 30px;
    background-color: #252b34;
}

.prop-more .icon {
    width: 14px;
    color: #a0a3a7;
}

.add-meta {
    display: flex;
    align-items: center;
    align-self: center;
    width: 180px;
    height: 30px;
    margin-top: 4px;
    padding: 0 6px;
    border-radius: 2px;
    background-color: #2f343d;
}

.add-meta span {
    flex: 1;
    padding-left: 6px;
}

/* Save dialog, floating over the editor */

.dialog {
    position: absolute;
    top: 159px;
    left: 434px;
    display: flex;
    flex-direction: column;
    width: 1052px;
    height: 732px;
    overflow: hidden;
    border: 1px solid #505050;
    border-radius: 8px;
    background-color: #363d4a;
    box-shadow: 0 20px 40px rgba(0, 0, 0, 0.55), 0 0 12px rgba(0, 0, 0, 0.2);
}

.dialog-title {
    display: flex;
    align-items: center;
    height: 30px;
    padding: 0 2px 0 8px;
    background-color: #202020;
    color: #fff;
}

.dialog-title .titlebar-text {
    margin-left: 5px;
}

.dialog-body {
    display: flex;
    flex: 1;
    flex-direction: column;
    gap: 4px;
    min-height: 0;
    padding: 9px;
}

.caption {
    padding: 0 4px 2px;
    font-weight: 700;
}

.path-label {
    padding-right: 8px;
}

.grow {
    flex: 1;
}

.browser {
    display: grid;
    flex: 1;
    grid-template-columns: 150px 1fr;
    gap: 4px;
    min-height: 0;
}

.places,
.files {
    display: flex;
    flex-direction: column;
    gap: 4px;
}

.head {
    height: 28px;
}

.head .sep {
    height: 28px;
}

.list {
    flex: 1;
    border-radius: 3px;
    background-color: #252b34;
}

.file-field {
    padding: 0 4px;
    border: 2px solid #70bafa;
    border-radius: 3px;
}

.file-field input::selection {
    background-color: #456a8e;
    color: #fff;
}

.type-drop {
    flex: none;
    width: 357px;
}

.actions {
    display: flex;
    justify-content: space-evenly;
    padding-top: 8px;
}

.actions button {
    width: 105px;
    height: 34px;
    border-radius: 3px;
    background-color: #252b34;
}

/* Highlighter circles drawn on top */

.marks {
    position: absolute;
    top: 0;
    left: 0;
    width: 100%;
    height: 100%;
    pointer-events: none;
}

.marks ellipse {
    fill: none;
    stroke: #fff200;
    stroke-width: 5;
}
```
